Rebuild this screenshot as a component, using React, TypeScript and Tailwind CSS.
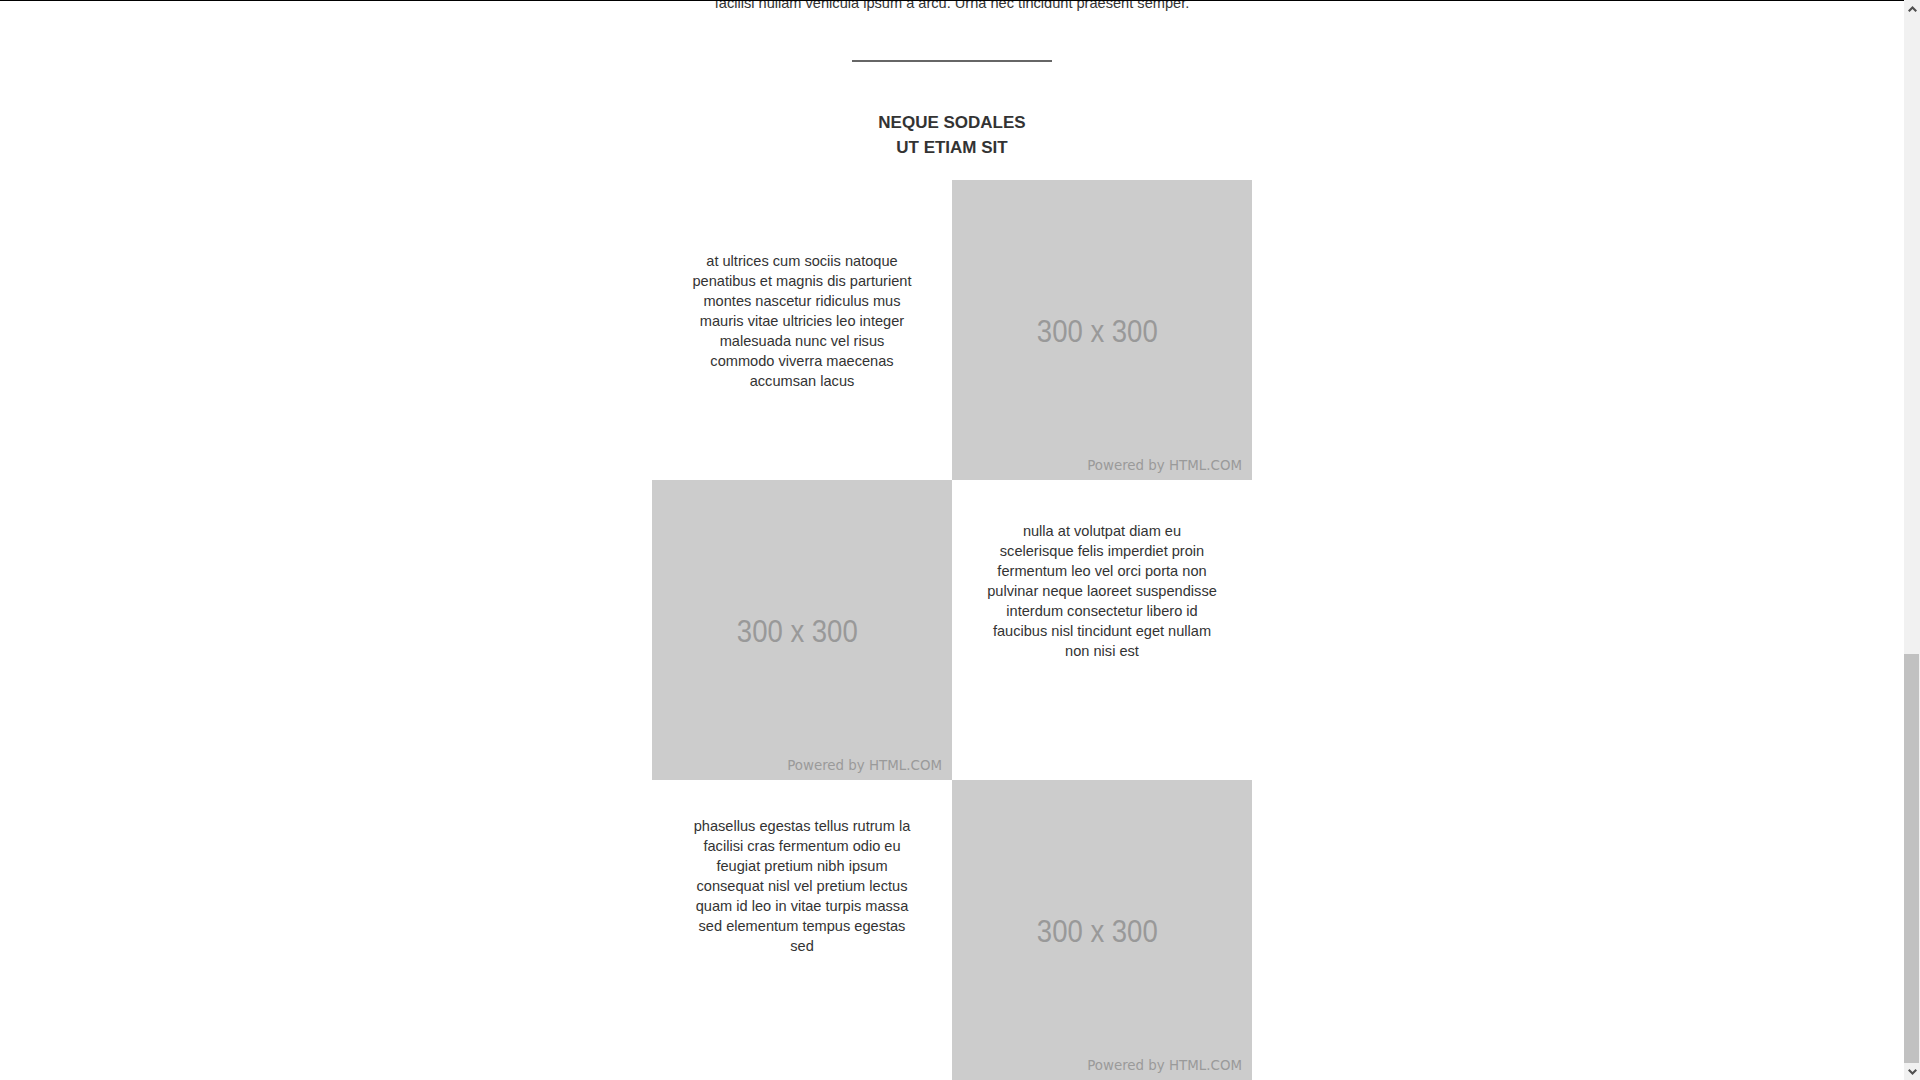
import React from "react";

function TextCell({ lines, pt }: { lines: string[]; pt: string }) {
  return (
    <div className={`h-[300px] w-[300px] text-center text-[14.6px] leading-[20px] text-[#333] ${pt}`}>
      {lines.map((l, i) => (
        <div key={i} className="whitespace-nowrap">
          {l}
        </div>
      ))}
    </div>
  );
}

function ImgCell() {
  return (
    <div className="relative flex h-[300px] w-[300px] items-center justify-center bg-[#cccccc] pr-[10px] pt-[2px]">
      <span className="inline-block scale-x-[0.86] text-[32px] leading-[36px] text-[#999999] font-['Liberation_Sans',Arial,sans-serif]">
        300 x 300
      </span>
      <span className="absolute bottom-[7px] right-[10px] whitespace-nowrap text-[13.4px] leading-[15px] text-[#9a9a9a] font-['DejaVu_Sans',Verdana,sans-serif]">
        Powered by HTML.COM
      </span>
    </div>
  );
}

function Chevron({ up }: { up: boolean }) {
  return (
    <svg width="9" height="6" viewBox="0 0 9 6" className={up ? "" : "rotate-180"}>
      <polygon points="4.5,0 9,4.5 7.5,6 4.5,3 1.5,6 0,4.5" fill="#505050" />
    </svg>
  );
}

export default function App() {
  return (
    <div className="flex h-[1080px] w-[1920px] overflow-hidden bg-white">
      <div className="h-full flex-1 overflow-hidden border-t border-black">
        <div className="-mt-[8px] flex flex-col items-center font-['Liberation_Sans',Arial,sans-serif] text-[#333]">
          <p className="whitespace-nowrap text-[14.6px] leading-[20px]">
            facilisi nullam vehicula ipsum a arcu. Urna nec tincidunt praesent semper.
          </p>
          <div className="mt-[47px] h-[2px] w-[200px] bg-[#666666]" />
          <h3 className="mt-[48px] text-center text-[17px] font-bold leading-[25px] text-[#333]">
            NEQUE SODALES
            <br />
            UT ETIAM SIT
          </h3>
          <div className="mt-[20px] grid grid-cols-[300px_300px]">
            <TextCell
              pt="pt-[71px]"
              lines={[
                "at ultrices cum sociis natoque",
                "penatibus et magnis dis parturient",
                "montes nascetur ridiculus mus",
                "mauris vitae ultricies leo integer",
                "malesuada nunc vel risus",
                "commodo viverra maecenas",
                "accumsan lacus",
              ]}
            />
            <ImgCell />
            <ImgCell />
            <TextCell
              pt="pt-[41px]"
              lines={[
                "nulla at volutpat diam eu",
                "scelerisque felis imperdiet proin",
                "fermentum leo vel orci porta non",
                "pulvinar neque laoreet suspendisse",
                "interdum consectetur libero id",
                "faucibus nisl tincidunt eget nullam",
                "non nisi est",
              ]}
            />
            <TextCell
              pt="pt-[36px]"
              lines={[
                "phasellus egestas tellus rutrum la",
                "facilisi cras fermentum odio eu",
                "feugiat pretium nibh ipsum",
                "consequat nisl vel pretium lectus",
                "quam id leo in vitae turpis massa",
                "sed elementum tempus egestas",
                "sed",
              ]}
            />
            <ImgCell />
          </div>
        </div>
      </div>
      <div className="flex h-full w-[16px] flex-col bg-[#f1f1f1]">
        <div className="flex h-[17px] items-center justify-center">
          <Chevron up />
        </div>
        <div className="h-[637px]" />
        <div className="mr-[1px] h-[409px] bg-[#c1c1c1]" />
        <div className="flex h-[17px] items-center justify-center">
          <Chevron up={false} />
        </div>
      </div>
    </div>
  );
}
